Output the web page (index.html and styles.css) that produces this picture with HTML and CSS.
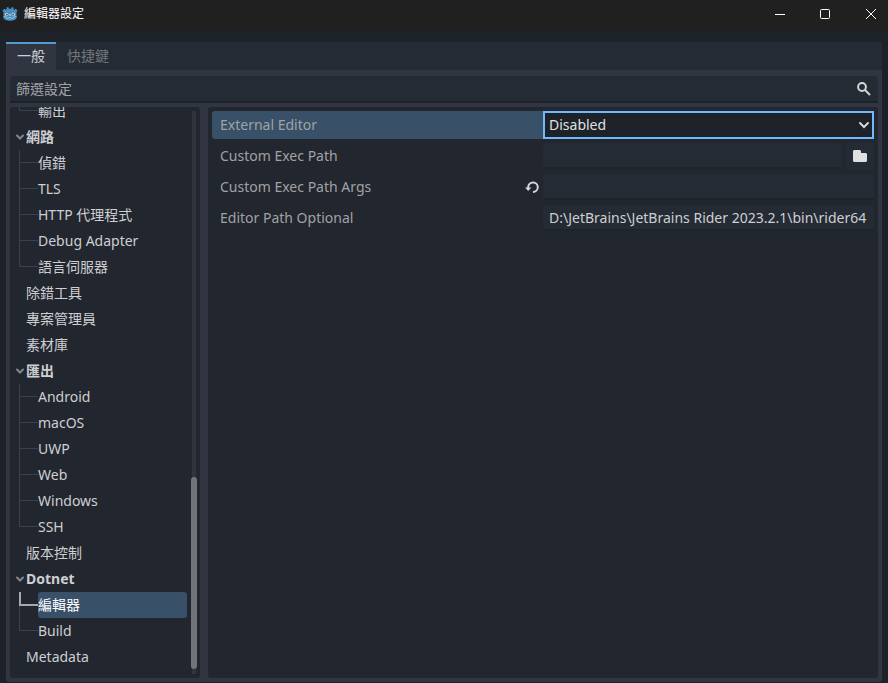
FILE: index.html
```html
<!DOCTYPE html>
<html lang="zh-Hant">
<head>
    <meta charset="UTF-8" />
    <meta name="viewport" content="width=device-width,initial-scale=1.0" />
    <title>編輯器設定</title>
    <link rel="stylesheet" href="styles.css">
</head>
<body>

    <header class="titlebar">
        <svg class="logo" width="16" height="16" viewBox="0 0 16 16">
            <path fill="#478cbf" d="M6.200 1l.8 1.800h2L9.800 1l1.700.5v1.800l.8.500 1.500-1 1.700 1.900-1 1.600V12c0 1.600-3.200 2.800-6.500 2.800S1.500 13.600 1.500 12V6.300l-1-1.600 1.700-1.900 1.500 1 .8-.5V1.500z" />
            <path fill="none" stroke="#a5cbe6" stroke-width=".8" d="M1.500 10.500l3 .4.300 1.400 2.200.1.200-1h1.600l.2 1 2.200-.1.300-1.400 3-.4" />
            <circle cx="4.700" cy="8.300" r="1.500" fill="#e8f1f8" />
            <circle cx="11.300" cy="8.300" r="1.500" fill="#e8f1f8" />
            <circle cx="4.900" cy="8.400" r=".9" fill="#414042" />
            <circle cx="11.100" cy="8.400" r=".9" fill="#414042" />
            <path stroke="#e8f1f8" d="M8 8v1.800" />
        </svg>
        <h1>編輯器設定</h1>
        <div class="window-btns">
            <button type="button" aria-label="最小化">
                <svg width="10" height="10" viewBox="0 0 10 10"><path d="M0 5.500h10" /></svg>
            </button>
            <button type="button" aria-label="最大化">
                <svg width="11" height="11" viewBox="0 0 11 11"><rect x=".5" y=".5" width="9" height="9" rx="1" /></svg>
            </button>
            <button type="button" aria-label="關閉">
                <svg width="10" height="10" viewBox="0 0 10 10"><path d="M0 0l10 10M10 0L0 10" /></svg>
            </button>
        </div>
    </header>

    <main class="settings">
        <div class="tabs" role="tablist">
            <button type="button" role="tab" class="tab active" aria-selected="true">一般</button>
            <button type="button" role="tab" class="tab" aria-selected="false">快捷鍵</button>
        </div>

        <div class="content">
            <div class="search">
                <input type="text" placeholder="篩選設定" aria-label="篩選設定">
                <svg width="16" height="16" viewBox="0 0 16 16">
                    <circle cx="6" cy="6" r="3.900" />
                    <path d="M9 9l5 5" />
                </svg>
            </div>

            <div class="panels">
                <nav class="sections">
                    <ul class="tree">
                        <li>
                            <ul>
                                <li><a href="#">輸出</a></li>
                            </ul>
                        </li>
                        <li>
                            <a href="#" class="group"><svg width="8" height="6" viewBox="0 0 8 6"><path d="M1 1.500l3 3 3-3" /></svg>網路</a>
                            <ul>
                                <li><a href="#">偵錯</a></li>
                                <li><a href="#">TLS</a></li>
                                <li><a href="#">HTTP 代理程式</a></li>
                                <li><a href="#">Debug Adapter</a></li>
                                <li><a href="#">語言伺服器</a></li>
                            </ul>
                        </li>
                        <li><a href="#">除錯工具</a></li>
                        <li><a href="#">專案管理員</a></li>
                        <li><a href="#">素材庫</a></li>
                        <li>
                            <a href="#" class="group"><svg width="8" height="6" viewBox="0 0 8 6"><path d="M1 1.500l3 3 3-3" /></svg>匯出</a>
                            <ul>
                                <li><a href="#">Android</a></li>
                                <li><a href="#">macOS</a></li>
                                <li><a href="#">UWP</a></li>
                                <li><a href="#">Web</a></li>
                                <li><a href="#">Windows</a></li>
                                <li><a href="#">SSH</a></li>
                            </ul>
                        </li>
                        <li><a href="#">版本控制</a></li>
                        <li>
                            <a href="#" class="group"><svg width="8" height="6" viewBox="0 0 8 6"><path d="M1 1.500l3 3 3-3" /></svg>Dotnet</a>
                            <ul>
                                <li class="selected"><a href="#">編輯器</a></li>
                                <li><a href="#">Build</a></li>
                            </ul>
                        </li>
                        <li><a href="#">Metadata</a></li>
                    </ul>
                    <div class="scrollbar">
                        <div class="thumb"></div>
                    </div>
                </nav>

                <form class="inspector">
                    <div class="row current">
                        <label for="editor">External Editor</label>
                        <div class="field dropdown">
                            <select id="editor">
                                <option>Disabled</option>
                            </select>
                            <svg width="12" height="8" viewBox="0 0 12 8"><path d="M2 2l4 4 4-4" /></svg>
                        </div>
                    </div>
                    <div class="row">
                        <label for="exec-path">Custom Exec Path</label>
                        <div class="field">
                            <input type="text" id="exec-path">
                            <button type="button" class="browse" aria-label="瀏覽">
                                <svg width="14" height="12" viewBox="0 0 14 12"><path d="M1 0h6l1 1v2h5l1 1v7l-1 1H1l-1-1V1z" /></svg>
                            </button>
                        </div>
                    </div>
                    <div class="row">
                        <label for="exec-args">Custom Exec Path Args</label>
                        <button type="button" class="revert" aria-label="還原">
                            <svg width="14" height="14" viewBox="0 0 14 14">
                                <path class="arc" d="M3.200 8.500V7a4.800 4.800 0 1 1 4.800 5" />
                                <path class="head" d="M0 7.500h6.400L3.200 11z" />
                            </svg>
                        </button>
                        <div class="field">
                            <input type="text" id="exec-args">
                        </div>
                    </div>
                    <div class="row">
                        <label for="editor-path">Editor Path Optional</label>
                        <div class="field">
                            <input type="text" id="editor-path" value="D:\JetBrains\JetBrains Rider 2023.2.1\bin\rider64">
                        </div>
                    </div>
                </form>
            </div>
        </div>
    </main>

</body>
</html>
```
FILE: styles.css
```css
* {
    box-sizing: border-box;
}

body {
    display: flex;
    flex-direction: column;
    height: 100vh;
    margin: 0;
    background: #1d2229;
    color: #cdcfd2;
    font-family: "Noto Sans", "Noto Sans CJK TC", sans-serif;
    font-size: 14px;
    line-height: 20px;
}

button, input, select {
    margin: 0;
    padding: 0;
    border: none;
    outline: none;
    background: none;
    color: inherit;
    font: inherit;
}

ul {
    list-style: none;
    margin: 0;
    padding: 0;
}

a {
    color: inherit;
    text-decoration: none;
}

svg {
    display: block;
    flex: none;
    fill: none;
}

/* title bar */

.titlebar {
    display: flex;
    align-items: center;
    height: 30px;
    padding: 0 12px 2px 2px;
    background: #202020;
    color: #fff;
}

.titlebar h1 {
    flex: 1;
    margin: 0 0 0 6px;
    font-size: 12px;
    font-weight: 400;
}

.window-btns {
    display: flex;
    align-items: center;
    gap: 35px;
}

.window-btns svg {
    stroke: #fff;
}

/* tabs */

.settings {
    display: flex;
    flex: 1;
    flex-direction: column;
    min-height: 0;
    margin: 12px 6px 1px;
    border-radius: 3px;
    background: #303541;
}

.tabs {
    display: flex;
    height: 28px;
    border-radius: 0 3px 0 0;
    background: #252b34;
}

.tab {
    padding: 0 11px 2px;
    border-top: 2px solid transparent;
    color: #73777c;
}

.tab.active {
    border-top-color: #5699ce;
    background: #303541;
    color: #cdcfd2;
}

.content {
    display: flex;
    flex: 1;
    flex-direction: column;
    gap: 4px;
    min-height: 0;
    padding: 6px 4px 4px;
}

.search {
    display: flex;
    align-items: center;
    height: 27px;
    padding: 0 6px;
    border-bottom: 2px solid #1d2229;
    border-radius: 3px 3px 0 0;
    background: #252b34;
}

.search input {
    flex: 1;
}

.search input::placeholder {
    color: #a0a3a7;
    opacity: 1;
}

.search svg {
    stroke: #d5d6d8;
    stroke-width: 2;
}

.panels {
    display: flex;
    flex: 1;
    gap: 8px;
    min-height: 0;
}

/* section tree, scrolled to its end */

.sections {
    display: flex;
    width: 190px;
    padding-right: 3px;
    border-radius: 3px;
    background: #22262e;
}

.tree {
    display: flex;
    flex: 1;
    flex-direction: column;
    justify-content: flex-end;
    padding: 0 4px 8px 9px;
    overflow: hidden;
}

.tree a {
    display: block;
    padding-left: 7px;
    line-height: 26px;
}

.tree .group {
    display: flex;
    align-items: center;
    gap: 2px;
    margin-left: -3px;
    padding-left: 0;
    font-weight: 700;
}

.group svg {
    stroke: #83868b;
    stroke-width: 2;
    stroke-linecap: round;
}

.tree ul li {
    display: grid;
    grid-template-columns: 19px 1fr;
    grid-template-rows: 13px 13px;
}

.tree ul li::before {
    content: "";
    grid-area: 1 / 1;
    border: solid #3c4047;
    border-width: 0 0 1px 1px;
}

.tree ul li:not(:last-child)::after {
    content: "";
    grid-area: 2 / 1;
    border-left: 1px solid #3c4047;
}

.tree ul a {
    grid-area: 1 / 2 / 3 / 3;
    padding: 0;
    border-radius: 3px;
}

.tree ul .selected {
    grid-template-rows: 14px 12px;
}

.tree ul .selected::before {
    border-color: #a6a8ab;
    border-width: 0 0 2px 2px;
}

.tree .selected a {
    background: #385068;
    color: #fff;
}

.scrollbar {
    display: flex;
    flex-direction: column;
    justify-content: flex-end;
    align-items: center;
    width: 6px;
    margin: 4px 0;
    padding-bottom: 5px;
    background: linear-gradient(#30343b, #30343b) center / 4px 100% no-repeat;
}

.thumb {
    width: 6px;
    height: 192px;
    border-radius: 3px;
    background: #707378;
}

/* properties */

.inspector {
    display: flex;
    flex: 1;
    flex-direction: column;
    gap: 3px;
    padding: 4px;
    border-radius: 3px;
    background: #22262e;
}

.row {
    display: flex;
    align-items: center;
    height: 28px;
    color: #a0a2a5;
}

.row.current {
    border-radius: 3px;
    background: #385068;
}

.row label {
    flex: 1;
    padding-left: 8px;
}

.field {
    display: flex;
    align-items: center;
    gap: 4px;
    width: 50%;
    color: #cdcfd2;
}

.field input {
    flex: 1;
    min-width: 0;
    height: 26px;
    padding: 0 6px;
    border-bottom: 2px solid #1f232a;
    border-radius: 3px 3px 0 0;
    background: #252b34;
}

.dropdown {
    display: grid;
    align-items: center;
}

.dropdown select {
    grid-area: 1 / 1;
    height: 28px;
    padding: 0 4px;
    border: 2px solid #70bafa;
    background: #1d2229;
    color: #e0e0e0;
    appearance: none;
}

.dropdown svg {
    grid-area: 1 / 1;
    justify-self: end;
    margin-right: 4px;
    pointer-events: none;
    stroke: #d5d6d8;
    stroke-width: 2;
    stroke-linecap: round;
}

.browse {
    display: flex;
    justify-content: center;
    align-items: center;
    width: 28px;
    height: 28px;
    border-radius: 3px;
    background: #252b34;
}

.browse svg {
    fill: #e0e0e0;
}

.revert {
    margin-right: 4px;
}

.revert .arc {
    stroke: #d5d6d8;
    stroke-width: 2;
}

.revert .head {
    fill: #d5d6d8;
}
```
